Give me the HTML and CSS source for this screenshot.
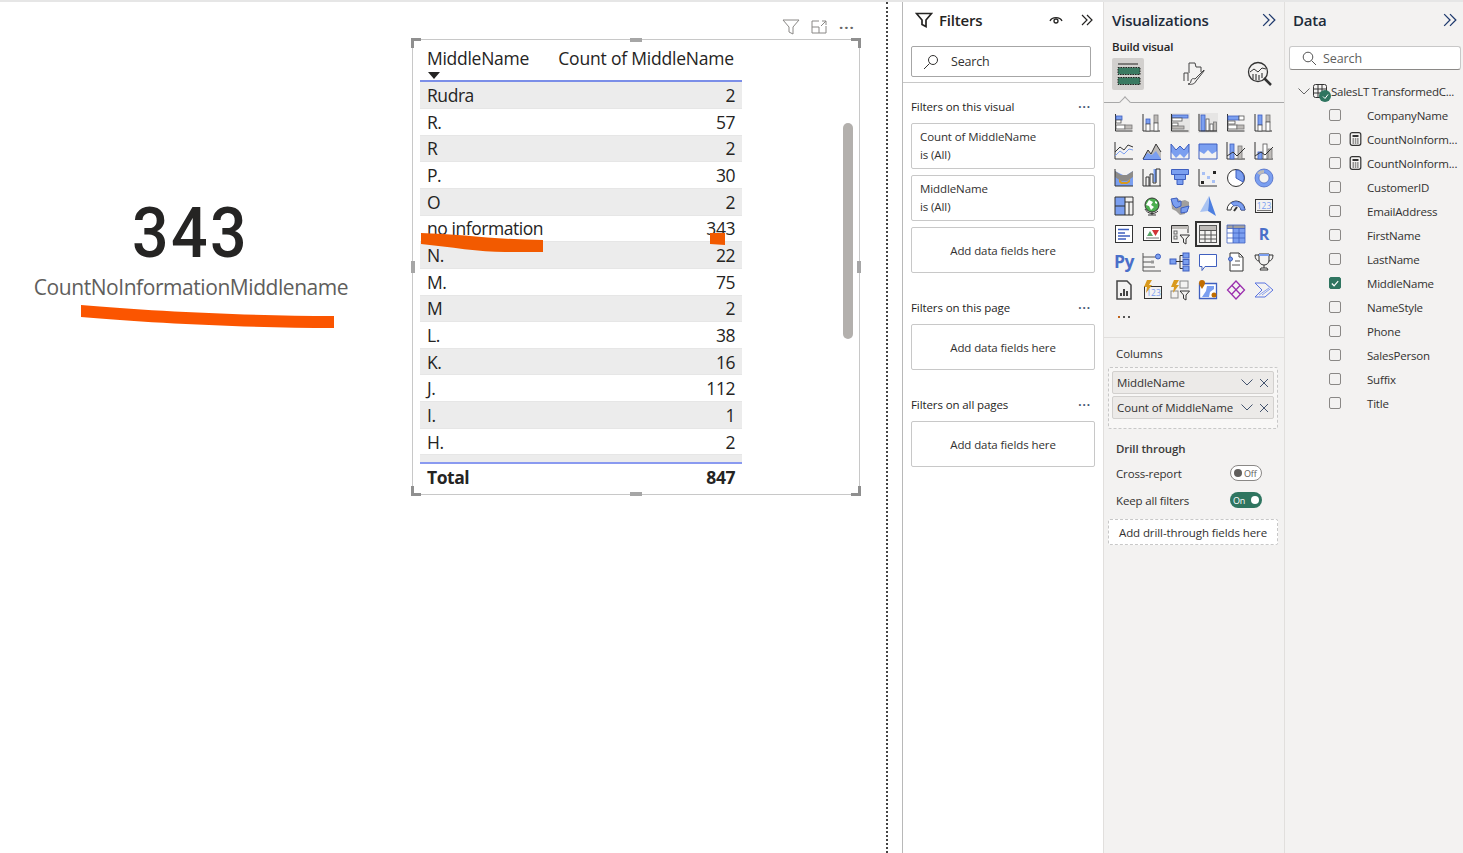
FILE: index.html
```html
<!DOCTYPE html>
<html lang="en">
<head>
<meta charset="utf-8">
<title>Report</title>
<link rel="stylesheet" href="styles.css">
</head>
<body>
<svg class="defs" width="0" height="0" aria-hidden="true"><defs>
<g id="chev"><path d="M1 1l5 5-5 5M6 1l5 5-5 5" fill="none" stroke="#252423" stroke-width="1.2"/></g>
</defs></svg>
<div class="app">
  <main class="canvas">
    <section class="card">
      <div class="card-value"><span>343</span></div>
      <div class="card-label">CountNoInformationMiddlename</div>
    </section>

    <div class="visual-tools">
      <svg width="18" height="16" viewBox="0 0 18 16"><path d="M1 1h16l-6 7v7l-4-2V8z" fill="none" stroke="#8a8886"/></svg>
      <svg width="16" height="14" viewBox="0 0 16 14"><path d="M8 1H1v12h14V6M1 7h7v6M10 6l5-5M11 1h4v4" fill="none" stroke="#8a8886"/></svg>
      <span class="tools-more">···</span>
    </div>

    <section class="visual">
      <span class="handle h-tl"></span><span class="handle h-tr"></span><span class="handle h-bl"></span><span class="handle h-br"></span>
      <span class="mid mid-t"></span><span class="mid mid-b"></span><span class="mid mid-l"></span><span class="mid mid-r"></span>
      <div class="table">
        <div class="thead">
          <div class="th th-name">MiddleName<span class="sort"></span></div>
          <div class="th th-count">Count of MiddleName</div>
        </div>
        <div class="tbody">
          <div class="row alt"><span>Rudra</span><span>2</span></div>
          <div class="row"><span>R.</span><span>57</span></div>
          <div class="row alt"><span>R</span><span>2</span></div>
          <div class="row"><span>P.</span><span>30</span></div>
          <div class="row alt"><span>O</span><span>2</span></div>
          <div class="row"><span>no information</span><span>343</span></div>
          <div class="row alt"><span>N.</span><span>22</span></div>
          <div class="row"><span>M.</span><span>75</span></div>
          <div class="row alt"><span>M</span><span>2</span></div>
          <div class="row"><span>L.</span><span>38</span></div>
          <div class="row alt"><span>K.</span><span>16</span></div>
          <div class="row"><span>J.</span><span>112</span></div>
          <div class="row alt"><span>I.</span><span>1</span></div>
          <div class="row"><span>H.</span><span>2</span></div>
          <div class="row alt"><span></span><span></span></div>
        </div>
        <div class="tfoot"><span>Total</span><span>847</span></div>
      </div>
      <div class="scrollbar"></div>
    </section>

    <svg class="ink" width="886" height="853" viewBox="0 0 886 853" aria-hidden="true">
      <path d="M81 305C150 311 250 316 334 316V328C250 328 150 323 81 317Z" fill="#fb5500"/>
      <path d="M421 233C460 234 500 240 543 240V252H505C480 252 450 247 421 244Z" fill="#f25a00"/>
      <path d="M710 233H725V245L710 244Z" fill="#f25a00"/>
    </svg>
  </main>

  <div class="divider"></div>

  <aside class="filters">
    <header class="filters-head">
      <svg class="f-icon" width="18" height="16" viewBox="0 0 18 16"><path d="M1.5 1.5h15l-5.5 6.500v6.500l-4-2V8z" fill="none" stroke="#252423" stroke-width="1.700"/></svg>
      <h2>Filters</h2>
      <svg class="eye" width="14" height="10" viewBox="0 0 14 10"><path d="M1 6C3 1.500 11 1.500 13 6" fill="none" stroke="#252423" stroke-width="1.300"/><circle cx="7" cy="6" r="2" fill="none" stroke="#252423" stroke-width="1.300"/></svg>
      <svg class="chev" width="12" height="12" viewBox="0 0 12 12"><use href="#chev"/></svg>
    </header>
    <div class="f-search-wrap">
      <div class="f-search">
        <svg width="16" height="16" viewBox="0 0 16 16"><circle cx="10" cy="6" r="4.500" fill="none" stroke="#323130"/><path d="M6.500 9.500L1 15" stroke="#323130"/></svg>
        <span>Search</span>
      </div>
    </div>
    <div class="f-body">
      <div class="f-title"><span>Filters on this visual</span><span class="dots">···</span></div>
      <div class="f-card"><div>Count of MiddleName</div><div>is (All)</div></div>
      <div class="f-card"><div>MiddleName</div><div>is (All)</div></div>
      <div class="f-drop">Add data fields here</div>
      <div class="f-title f-gap"><span>Filters on this page</span><span class="dots">···</span></div>
      <div class="f-drop">Add data fields here</div>
      <div class="f-title f-gap"><span>Filters on all pages</span><span class="dots">···</span></div>
      <div class="f-drop">Add data fields here</div>
    </div>
  </aside>

  <aside class="viz">
    <header class="pane-head">
      <h2>Visualizations</h2>
      <svg width="14" height="14" viewBox="0 0 12 12"><path d="M1 1l5 5-5 5M6 1l5 5-5 5" fill="none" stroke="#1f3a6e" stroke-width="1.100"/></svg>
    </header>
    <div class="build">Build visual</div>
    <div class="tabs">
      <div class="tab active">
        <svg width="26" height="24" viewBox="0 0 26 24"><path d="M3 2h20" stroke="#252423"/><rect x="3" y="5.500" width="22" height="7" fill="#3a7a62" stroke="#252423" stroke-dasharray="1.500 1"/><rect x="3" y="15.500" width="22" height="7" fill="#3a7a62" stroke="#252423" stroke-dasharray="1.500 1"/></svg>
      </div>
      <div class="tab">
        <svg width="24" height="24" viewBox="0 0 24 24"><path d="M2 19v-8h4v8M7 11V1h6l1 4 5 0v5" fill="none" stroke="#444"/><path d="M22 8L13 17c-2-1-4 0-4 2 0 2-2 3-3 3 3 1 7 0 8-3l8-10z" fill="#f3f2f1" stroke="#444"/></svg>
      </div>
      <div class="tab">
        <svg width="26" height="26" viewBox="0 0 26 26"><circle cx="11" cy="11" r="9.500" fill="none" stroke="#333" stroke-width="1.300"/><path d="M3 11l4-3 4 3 4-4 4 1" fill="none" stroke="#333"/><path d="M6 13v5M9 13v6M12 14v5M15 12v5" stroke="#666" stroke-width="1.500"/><path d="M17 17l7 7" stroke="#333" stroke-width="2.500"/></svg>
      </div>
    </div>
    <div class="tab-rule"><span class="notch"></span></div>

    <div class="icons">
      <svg viewBox="0 0 20 20"><path d="M1.500 1v17h17" class="k"/><rect x="2" y="3" width="6" height="4" class="b"/><rect x="2" y="7" width="5" height="3" class="w"/><rect x="2" y="12" width="9" height="4" class="w"/><rect x="11" y="12" width="7" height="4" class="g"/></svg>
      <svg viewBox="0 0 20 20"><path d="M1 1v17h17" class="k"/><rect x="4" y="6" width="4" height="5" class="b"/><rect x="4" y="11" width="4" height="7" class="w"/><rect x="12" y="2" width="4" height="8" class="g"/><rect x="12" y="10" width="4" height="8" class="w"/></svg>
      <svg viewBox="0 0 20 20"><rect x="0" y="0" width="20" height="20" fill="#e6e5e4"/><rect x="2" y="2" width="16" height="3" class="b"/><rect x="2" y="5" width="10" height="3" class="w"/><rect x="2" y="10" width="6" height="3" class="w"/><rect x="2" y="13" width="12" height="3" class="g"/><path d="M1.500 1v17h17" class="k"/></svg>
      <svg viewBox="0 0 20 20"><rect x="0" y="0" width="20" height="20" fill="#e6e5e4"/><rect x="3" y="2" width="4" height="16" class="b"/><rect x="8" y="6" width="3" height="12" class="w"/><rect x="12" y="11" width="3" height="7" class="w"/><rect x="15.500" y="9" width="3" height="9" class="g"/><path d="M1 1v17h18" class="k"/></svg>
      <svg viewBox="0 0 20 20"><path d="M1.500 1v17h17" class="k"/><rect x="2" y="3" width="11" height="4" class="b"/><rect x="13" y="3" width="5" height="4" class="w"/><rect x="2" y="8" width="7" height="3" class="w"/><rect x="2" y="12" width="9" height="4" class="w"/><rect x="11" y="12" width="7" height="4" class="g"/></svg>
      <svg viewBox="0 0 20 20"><path d="M1 1v17h17" class="k"/><rect x="4" y="2" width="4" height="10" class="b"/><rect x="4" y="12" width="4" height="6" class="w"/><rect x="12" y="2" width="4" height="7" class="g"/><rect x="12" y="9" width="4" height="9" class="w"/></svg>

      <svg viewBox="0 0 20 20"><path d="M1 1v17h18" class="k"/><path d="M1 11l5-5 4 3 4-5 5 2" class="k2"/><path d="M1 15l5-5 4 3 5-5 4 1" fill="none" stroke="#7b9ff0"/></svg>
      <svg viewBox="0 0 20 20"><path d="M1 18l5-9 3 4 5-10 5 8v7z" fill="#bebbb8"/><path d="M1 18l4-6 5 2 4-4 5 8z" fill="#7b9ff0"/><path d="M1 18l5-9 3 4 5-10 5 8" class="k2"/><path d="M1 18.500h18" stroke="#3f5fbf"/></svg>
      <svg viewBox="0 0 20 20"><path d="M1 3l5 6 4-4 4 4 5-6v8l-5 6-4-4-4 4-5-6z" fill="#7b9ff0"/><path d="M1 3l5 6 4-4 4 4 5-6M1 3v15h18V3" fill="none" stroke="#3f5fbf"/></svg>
      <svg viewBox="0 0 20 20"><path d="M1 3h18v7l-5 3-4-4-4 4-5-3z" fill="#7b9ff0"/><path d="M1 3v15h18V3z" fill="none" stroke="#3f5fbf"/></svg>
      <svg viewBox="0 0 20 20"><path d="M1 1v17h18" class="k"/><rect x="4" y="3" width="4" height="15" class="b"/><rect x="12" y="5" width="4" height="13" class="g"/><path d="M1 15l6-4 4 4 8-8" class="k2"/></svg>
      <svg viewBox="0 0 20 20"><path d="M1 1v17h18" class="k"/><rect x="4" y="11" width="4" height="7" class="b"/><rect x="9" y="3" width="4" height="15" class="w"/><rect x="14" y="8" width="4" height="10" class="g"/><path d="M1 15l6-4 4 3 8-8" class="k2"/></svg>

      <svg viewBox="0 0 20 20"><path d="M1 3l6 3 4 2 8-5v15H1z" fill="#7b9ff0"/><path d="M1 3l6 4 6 0 6-4v6l-6 4H7L1 9z" fill="#8d8b88"/><path d="M5 11l3 3h5l3-3v3l-3 2H7l-2-2z" fill="#d99a1e"/><path d="M1 1v17h18" class="k"/></svg>
      <svg viewBox="0 0 20 20"><rect x="11.500" y="1" width="3" height="13" fill="#7b9ff0"/><path d="M1 1v17h18M4 18V9h3v9M8 18V6h3v9h3V1h4v17" class="k2"/></svg>
      <svg viewBox="0 0 20 20"><path d="M1.500 1.500h17v5h-17zM4.500 6.500h11v5h-11zM7 11.500h6v5H7z" fill="#7b9ff0" stroke="#3f5fbf"/></svg>
      <svg viewBox="0 0 20 20"><path d="M1 1v17h18" class="k"/><rect x="4" y="4" width="3" height="3" fill="#a8c0f5"/><rect x="9" y="8" width="3" height="3" fill="#a8c0f5"/><rect x="14" y="12" width="3" height="3" fill="#a8c0f5"/><rect x="3" y="13" width="3" height="3" fill="#252423"/><rect x="15" y="3" width="3" height="3" fill="#252423"/></svg>
      <svg viewBox="0 0 20 20"><circle cx="10" cy="10" r="8.500" fill="#fff" stroke="#333"/><path d="M10 2a8 8 0 0 1 7 12L10 10z" fill="#7b9ff0" stroke="#3f5fbf"/></svg>
      <svg viewBox="0 0 20 20"><circle cx="10" cy="10" r="7" fill="none" stroke="#7b9ff0" stroke-width="4"/><circle cx="10" cy="10" r="9" fill="none" stroke="#3f5fbf" stroke-width=".700"/><circle cx="10" cy="10" r="5" fill="#f3f2f1" stroke="#3f5fbf" stroke-width=".700"/><path d="M3 5a9 9 0 0 1 7-3v3a5 5 0 0 0-4 2z" fill="#bebbb8"/></svg>

      <svg viewBox="0 0 20 20"><rect x="1" y="1" width="10" height="18" fill="#7b9ff0"/><path d="M1 1h18v18H1zM1 10h10M11 1v18M11 6h8M15 6v13" fill="none" stroke="#333"/></svg>
      <svg viewBox="0 0 20 20"><circle cx="10" cy="9" r="7" fill="#4caf50" stroke="#333"/><path d="M7 4l4 2-2 3 3 2-3 3-2-4-3-1zM13 5l2 1 0 2-2-1z" fill="#fff"/><path d="M6 19h8M10 16v3M3 13a8 8 0 0 0 13 2" fill="none" stroke="#333"/></svg>
      <svg viewBox="0 0 20 20"><path d="M1 3l6-1 4 3 4-1 4 2v6l-3 1-1 5-5 1-4-4-4-2z" fill="#a19f9d"/><path d="M1 3l6-1 1 4 3-1 0 5-5 2-3-3z" fill="#7b9ff0" stroke="#3f5fbf"/><path d="M11 12l8-2-2 6-6 1z" fill="#7b9ff0" stroke="#3f5fbf"/></svg>
      <svg viewBox="0 0 20 20"><path d="M11 0l7 20-8-5z" fill="#4d7fe0"/><path d="M11 0L2 16l8-1z" fill="#a9c3f2"/></svg>
      <svg viewBox="0 0 20 20"><path d="M1 14a9 9 0 0 1 18 0h-4a5 5 0 0 0-10 0z" fill="#fff" stroke="#333"/><path d="M5 7a9 9 0 0 1 12 2l2 5h-4a5 5 0 0 0-7-4z" fill="#7b9ff0" stroke="#3f5fbf" stroke-width=".700"/><path d="M8 15l3-4" stroke="#333" stroke-width="2"/></svg>
      <svg viewBox="0 0 20 20"><rect x="1.500" y="3.500" width="17" height="13" fill="none" stroke="#333"/><path d="M3 14.500h14" stroke="#777"/><text x="10" y="12.500" class="svg-num">123</text></svg>

      <svg viewBox="0 0 20 20"><rect x="1.500" y="1.500" width="17" height="17" fill="#fff" stroke="#333"/><path d="M4 5.500h11M4 9h7M4 12h12M4 15h8" stroke="#3f5fbf" stroke-width="1.300"/></svg>
      <svg viewBox="0 0 20 20"><rect x="1.500" y="3.500" width="17" height="13" fill="#fff" stroke="#333"/><path d="M5 12l3-5 3 5z" fill="#5aa469"/><path d="M10 6h7l-3.500 6z" fill="#d13438"/><path d="M4 14h13" stroke="#777"/></svg>
      <svg viewBox="0 0 20 20"><path d="M18 9V1.500H1.500v17H9" fill="none" stroke="#333"/><rect x="2" y="2" width="16" height="3" fill="#bebbb8"/><rect x="4" y="7" width="3" height="3" fill="none" stroke="#666"/><rect x="4" y="12" width="3" height="3" fill="none" stroke="#666"/><path d="M10 11h9.500l-3.500 4v5l-2.500-1.500V15z" fill="#f3f2f1" stroke="#333"/></svg>
      <svg class="sel" viewBox="0 0 20 20"><rect x="1.500" y="1.500" width="17" height="17" fill="none" stroke="#555"/><rect x="2" y="2" width="16" height="4" fill="#bebbb8"/><path d="M1.500 6.500h17M1.500 11h17M1.500 15h17M7 6v13M13 6v13" fill="none" stroke="#555"/></svg>
      <svg viewBox="0 0 20 20"><rect x="1" y="1" width="18" height="18" fill="#fff"/><rect x="1" y="1" width="18" height="3.500" fill="#a19f9d"/><rect x="7" y="4" width="12" height="15" fill="#7b9ff0"/><path d="M1 1h18v18H1zM1 4.500h18M1 9h18M1 14h18M7 1v18M13 4v15" fill="none" stroke="#3f5fbf" stroke-width=".800"/></svg>
      <span class="txt-icon r-icon">R</span>

      <span class="txt-icon py-icon">Py</span>
      <svg viewBox="0 0 20 20"><path d="M1 1v18h18M1 5h13M1 10h9M1 15h12" fill="none" stroke="#555"/><circle cx="16" cy="4.500" r="2.500" fill="#7b9ff0" stroke="#3f5fbf"/><rect x="9" y="8.500" width="3" height="3" fill="#999"/></svg>
      <svg viewBox="0 0 20 20"><rect x="0" y="7" width="6" height="5" fill="#7b9ff0" stroke="#3f5fbf"/><path d="M6 9.500h4M10 3.500v13M10 3.500h3M10 9.500h3M10 16.500h3" fill="none" stroke="#333"/><rect x="13" y="1" width="6" height="5" fill="#7b9ff0" stroke="#3f5fbf"/><rect x="13" y="7.500" width="6" height="5" fill="#7b9ff0" stroke="#3f5fbf"/><rect x="13" y="14" width="6" height="5" fill="#7b9ff0" stroke="#3f5fbf"/></svg>
      <svg viewBox="0 0 20 20"><path d="M1.500 2.500h17v12H7l-3 4v-4H1.500z" fill="#fff" stroke="#3f5fbf"/></svg>
      <svg viewBox="0 0 20 20"><path d="M4 1h9l4 4v14H4z" fill="#fff" stroke="#333"/><path d="M13 1v4h4M9 9h5M6 13h8" fill="none" stroke="#555"/><circle cx="4.500" cy="7" r="2" fill="#7b9ff0" stroke="#3f5fbf"/></svg>
      <svg viewBox="0 0 20 20"><path d="M5 2h10v6c0 3-2 5-5 5s-5-2-5-5z" fill="#f3f2f1" stroke="#333"/><rect x="5" y="2" width="10" height="2" fill="#7b9ff0"/><path d="M5 3H1c0 4 2 6 4 6M15 3h4c0 4-2 6-4 6M10 13v3M6 18h8l-1-2H7z" fill="none" stroke="#333"/></svg>

      <svg viewBox="0 0 20 20"><path d="M3 1h10l4 4v14H3z" fill="#f3f2f1" stroke="#444" stroke-width="1.500"/><path d="M7 16v-3M10 16V9M13 16v-5" stroke="#444" stroke-width="2"/></svg>
      <svg viewBox="0 0 20 20"><rect x="2.500" y="6.500" width="17" height="12" fill="none" stroke="#333"/><text x="11.500" y="15.500" class="svg-num">123</text><path d="M5 0h5L7 5h3l-6 8 1-6H2z" fill="#d99a1e"/></svg>
      <svg viewBox="0 0 20 20"><rect x="10" y="1" width="8" height="7" fill="none" stroke="#888"/><rect x="1" y="11" width="7" height="7" fill="none" stroke="#888"/><path d="M10 11h9.500l-3.500 4v5l-2.500-1.500V15z" fill="#f3f2f1" stroke="#333"/><path d="M4 0h5L6 5h3l-6 8 1-6H1z" fill="#d99a1e"/></svg>
      <svg viewBox="0 0 20 20"><path d="M1.500 3.500h17v15h-17z" fill="#fff" stroke="#3f5fbf" stroke-width="1.300"/><path d="M9 6h7v3l-4 3-1 5H4l4-6z" fill="#7b9ff0"/><path d="M4 0c2 0 3 1 3 3 0 2-2 4-3 6-1-2-3-4-3-6 0-2 1-3 3-3z" fill="#c06c00"/><circle cx="16" cy="15" r="2.500" fill="#c06c00"/></svg>
      <svg viewBox="0 0 20 20"><path d="M10 1l8.500 9-8.500 9-8.500-9zM6 5.500l8.500 9M14 5.500l-8.500 9" fill="none" stroke="#9b2fae" stroke-width="1.300"/></svg>
      <svg viewBox="0 0 20 20"><path d="M1 3h10l8 7-8 7H1l7-7z" fill="none" stroke="#5b74e0"/><path d="M5 15l10-7M8 15l8-6" stroke="#8aa0ee"/></svg>

      <span class="more-viz"><i></i><i></i><i></i></span>
    </div>

    <div class="viz-rule"></div>
    <div class="section-label">Columns</div>
    <div class="wells">
      <div class="well-item"><span class="well-name">MiddleName</span><svg width="12" height="7" viewBox="0 0 12 7"><path d="M.5.5L6 6l5.500-5.500" fill="none" stroke="#44546f"/></svg><svg width="10" height="10" viewBox="0 0 10 10"><path d="M1 1l8 8M9 1L1 9" stroke="#44546f"/></svg></div>
      <div class="well-item"><span class="well-name">Count of MiddleName</span><svg width="12" height="7" viewBox="0 0 12 7"><path d="M.5.5L6 6l5.500-5.500" fill="none" stroke="#44546f"/></svg><svg width="10" height="10" viewBox="0 0 10 10"><path d="M1 1l8 8M9 1L1 9" stroke="#44546f"/></svg></div>
    </div>
    <div class="section-label drill">Drill through</div>
    <div class="toggle-row cross"><span>Cross-report</span><span class="toggle off"><i></i>Off</span></div>
    <div class="toggle-row keep"><span>Keep all filters</span><span class="toggle on">On<i></i></span></div>
    <div class="drill-drop">Add drill-through fields here</div>
  </aside>

  <aside class="data">
    <header class="pane-head data-head">
      <h2>Data</h2>
      <svg width="14" height="14" viewBox="0 0 12 12"><path d="M1 1l5 5-5 5M6 1l5 5-5 5" fill="none" stroke="#1f3a6e" stroke-width="1.100"/></svg>
    </header>
    <div class="d-search">
      <svg width="15" height="15" viewBox="0 0 15 15"><circle cx="6" cy="6" r="4.800" fill="none" stroke="#555"/><path d="M9.500 9.500L14 14" stroke="#555"/></svg>
      <span>Search</span>
    </div>
    <div class="tree-root">
      <svg class="tree-chev" width="12" height="7" viewBox="0 0 12 7"><path d="M.5.5L6 6l5.500-5.500" fill="none" stroke="#666"/></svg>
      <span class="table-ico">
        <svg width="14" height="14" viewBox="0 0 14 14"><rect x=".5" y=".5" width="13" height="13" rx="2" fill="none" stroke="#333"/><path d="M.5 5h13M.5 9h13M5 .5v13M9 .5v13" stroke="#333"/></svg>
        <span class="ok"><svg width="7" height="7" viewBox="0 0 7 7"><path d="M1 3.500l2 2 3-4" fill="none" stroke="#fff"/></svg></span>
      </span>
      <span class="root-name">SalesLT TransformedC...</span>
    </div>
    <ul class="fields">
      <li><span class="cb"></span><span class="fi"></span><span>CompanyName</span></li>
      <li><span class="cb"></span><span class="fi"><svg width="13" height="14" viewBox="0 0 12 14"><rect x=".7" y=".7" width="10.600" height="12.600" rx="2" fill="none" stroke="#333" stroke-width="1.200"/><rect x="3" y="3" width="6" height="2" fill="#333"/><path d="M3 7h1.500M5.300 7h1.500M7.600 7h1.500M3 9h1.500M5.300 9h1.500M7.600 9h1.500M3 11h1.500M5.300 11h1.500M7.600 11h1.500" stroke="#333"/></svg></span><span>CountNoInform...</span></li>
      <li><span class="cb"></span><span class="fi"><svg width="13" height="14" viewBox="0 0 12 14"><rect x=".7" y=".7" width="10.600" height="12.600" rx="2" fill="none" stroke="#333" stroke-width="1.200"/><rect x="3" y="3" width="6" height="2" fill="#333"/><path d="M3 7h1.500M5.300 7h1.500M7.600 7h1.500M3 9h1.500M5.300 9h1.500M7.600 9h1.500M3 11h1.500M5.300 11h1.500M7.600 11h1.500" stroke="#333"/></svg></span><span>CountNoInform...</span></li>
      <li><span class="cb"></span><span class="fi"></span><span>CustomerID</span></li>
      <li><span class="cb"></span><span class="fi"></span><span>EmailAddress</span></li>
      <li><span class="cb"></span><span class="fi"></span><span>FirstName</span></li>
      <li><span class="cb"></span><span class="fi"></span><span>LastName</span></li>
      <li><span class="cb checked"><svg width="11" height="11" viewBox="0 0 11 11"><path d="M2 5.500l2.500 2.500L9 3" fill="none" stroke="#fff" stroke-width="1.300"/></svg></span><span class="fi"></span><span>MiddleName</span></li>
      <li><span class="cb"></span><span class="fi"></span><span>NameStyle</span></li>
      <li><span class="cb"></span><span class="fi"></span><span>Phone</span></li>
      <li><span class="cb"></span><span class="fi"></span><span>SalesPerson</span></li>
      <li><span class="cb"></span><span class="fi"></span><span>Suffix</span></li>
      <li><span class="cb"></span><span class="fi"></span><span>Title</span></li>
    </ul>
  </aside>
</div>
</body>
</html>
```
FILE: styles.css
```css
* { box-sizing: border-box; }
html, body { margin: 0; height: 100%; }
body { font-family: "Open Sans", "Noto Sans", "Liberation Sans", sans-serif; color: #252423; background: #fff; overflow: hidden; }
h2 { margin: 0; font-weight: 600; }
ul { list-style: none; margin: 0; padding: 0; }
.defs { position: absolute; }
.app { display: flex; height: 853px; width: 1463px; border-top: 2px solid #e6e6e6; }

.canvas { position: relative; width: 886px; height: 851px; flex: none; }
.card { position: absolute; left: 0; top: 191px; width: 382px; text-align: center; }
.card-value { font-family: Roboto, sans-serif; font-size: 70px; font-weight: 500; line-height: 80px; color: #252423; }
.card-value span { display: inline-block; letter-spacing: 2.6px; transform: scaleX(.92); }
.card-label { font-size: 21px; line-height: 28px; color: #605e5c; letter-spacing: -0.44px; }
.visual-tools { position: absolute; left: 782px; top: 17px; display: flex; align-items: center; gap: 11px; }
.tools-more { font-size: 15px; line-height: 14px; color: #666; letter-spacing: 1px; font-weight: 700; margin-left: 1px; }
.visual { position: absolute; left: 412px; top: 37px; width: 448px; height: 456px; border: 1px solid #c8c8c8; background: #fff; }
.handle { position: absolute; width: 10px; height: 10px; border: 0 solid #8f8f8f; }
.h-tl { left: -2px; top: -2px; border-width: 3px 0 0 3px; }
.h-tr { right: -2px; top: -2px; border-width: 3px 3px 0 0; }
.h-bl { left: -2px; bottom: -2px; border-width: 0 0 3px 3px; }
.h-br { right: -2px; bottom: -2px; border-width: 0 3px 3px 0; }
.mid { position: absolute; background: #a6a6a6; }
.mid-t { left: 217px; top: -2px; width: 12px; height: 4px; }
.mid-b { left: 217px; bottom: -2px; width: 12px; height: 4px; }
.mid-l { left: -2px; top: 221px; width: 4px; height: 12px; }
.mid-r { right: -2px; top: 221px; width: 4px; height: 12px; }
.scrollbar { position: absolute; left: 430px; top: 83px; width: 10px; height: 216px; background: #b3b0ad; border-radius: 5px; }

.table { position: absolute; left: 7px; top: 0; width: 322px; font-size: 17.500px; letter-spacing: -0.45px; color: #252423; display: flex; flex-direction: column; }
.thead { display: flex; justify-content: space-between; height: 42px; padding: 6px 7px 0; border-bottom: 2px solid #7b8ee8; line-height: 24px; position: relative; letter-spacing: -0.28px; }
.th-name { position: relative; }
.th-count { letter-spacing: -0.2px; margin-right: 1px; }
.sort { position: absolute; left: 1px; top: 26px; border: 6px solid transparent; border-top: 7px solid #252423; border-bottom: 0; }
.tbody { height: 380px; overflow: hidden; padding-top: 0.400px; }
.row { display: flex; justify-content: space-between; align-items: center; height: 26.650px; padding: 0 7px; line-height: 24px; background: #fff; border-bottom: 1px solid #e6e6e6; }
.row.alt { background: #ececec; }
.tfoot { display: flex; justify-content: space-between; height: 28px; padding: 0 7px; align-items: center; font-weight: 700; border-top: 2px solid #8a9af0; }
.ink { position: absolute; left: 0; top: -2px; pointer-events: none; }

.divider { width: 16px; flex: none; border-left: 2px dotted #444; }

.filters { width: 201px; flex: none; border-left: 1px solid #b8b8b8; background: #fff; height: 851px; }
.filters-head { display: flex; align-items: center; height: 36px; padding: 0 10px 0 12px; }
.filters-head h2 { font-size: 15px; margin-left: 6px; flex: 1; letter-spacing: -0.2px; }
.eye { margin-right: 18px; }
.f-search-wrap { padding: 8px 12px 0 8px; height: 45px; border-bottom: 1px solid #c8c8c8; }
.f-search { display: flex; align-items: center; gap: 12px; height: 31px; padding-left: 11px; border: 1px solid #a6a6a6; font-size: 12.500px; letter-spacing: -0.2px; border-radius: 2px; }
.f-search span { color: #323130; }
.f-body { padding: 16px 8px 0 8px; font-size: 11.500px; letter-spacing: -0.1px; }
.f-title { display: flex; justify-content: space-between; line-height: 16px; color: #252423; margin-bottom: 8px; padding-right: 4px; }
.f-gap { margin-top: 27px; margin-bottom: 8px; }
.dots { color: #44546f; letter-spacing: 1px; font-weight: 700; }
.f-card { height: 46px; margin-bottom: 6px; padding: 4px 8px; border: 1px solid #c8c8c8; border-radius: 2px; line-height: 18px; color: #323130; background: #fff; }
.f-drop { height: 46px; display: flex; align-items: center; justify-content: center; border: 1px solid #c8c8c8; border-radius: 2px; color: #323130; }

.viz { width: 181px; flex: none; background: #f3f2f1; border-left: 1px solid #e1dfdd; height: 851px; }
.pane-head { display: flex; align-items: center; justify-content: space-between; height: 36px; margin-bottom: 1px; padding: 0 8px; }
.pane-head h2 { font-size: 15px; color: #1d2b3a; letter-spacing: -0.2px; }
.build { font-size: 11.500px; font-weight: 600; padding-left: 8px; line-height: 16px; letter-spacing: -0.2px; }
.tabs { display: flex; justify-content: space-between; align-items: flex-start; padding: 3px 8px 0 8px; height: 47px; }
.tab { width: 32px; height: 32px; display: flex; align-items: center; justify-content: center; }
.tab.active { background: #d2d0ce; border-radius: 2px; }
.tab-rule { position: relative; height: 1px; background: #a8a8a8; }
.notch { position: absolute; left: 17px; top: -4px; width: 8px; height: 8px; background: #f3f2f1; border-left: 1px solid #a8a8a8; border-top: 1px solid #a8a8a8; transform: rotate(45deg); }
.icons { display: grid; grid-template-columns: repeat(6, 28px); grid-auto-rows: 27.800px; padding: 6px 0 0 6px; justify-items: center; align-items: center; height: 234px; }
.icons svg { width: 20px; height: 20px; overflow: visible; }
.icons svg.sel { outline: 2px solid #333; outline-offset: 1px; }
.icons .k { fill: none; stroke: #333; }
.icons .k2 { fill: none; stroke: #333; }
.icons .b { fill: #7b9ff0; stroke: #3f5fbf; stroke-width: .8; }
.icons .w { fill: #fff; stroke: #555; stroke-width: .8; }
.icons .g { fill: #bebbb8; stroke: #777; stroke-width: .8; }
.svg-num { font-size: 8.500px; fill: #7b9ff0; text-anchor: middle; font-family: "Open Sans", sans-serif; }
.txt-icon { font-weight: 700; color: #4a6fc9; font-family: "Open Sans", sans-serif; line-height: 1; }
.r-icon { font-size: 16px; }
.py-icon { font-size: 17.500px; letter-spacing: -0.5px; }
.more-viz { display: flex; gap: 3px; justify-self: center; }
.more-viz i { width: 2px; height: 2px; background: #555; }
.more-viz i:first-child { background: #c0641c; }
.viz-rule { height: 1px; background: #e1dfdd; }
.section-label { font-size: 11.500px; padding-left: 12px; line-height: 16px; margin-top: 8px; color: #323130; letter-spacing: -0.1px; }
.drill { font-weight: 600; margin-top: 12px; color: #3b3a39; }
.wells { margin: 5px 6px 0 4px; padding: 3px; height: 62px; border: 1px dashed #c8c8c8; border-radius: 2px; background: #f8f7f6; display: flex; flex-direction: column; gap: 2px; }
.well-item { height: 23px; display: flex; align-items: center; padding: 0 4px; gap: 6px; background: #eceae8; border: 1px solid #d2d0ce; border-radius: 2px; font-size: 11.500px; color: #323130; letter-spacing: -0.1px; }
.well-name { flex: 1; white-space: nowrap; }
.toggle-row { display: flex; justify-content: space-between; align-items: center; height: 20px; font-size: 11.500px; padding: 0 22px 0 12px; margin-top: 7px; color: #323130; letter-spacing: -0.15px; }
.cross { margin-top: 6px; }
.toggle { display: flex; align-items: center; width: 32px; height: 16px; border-radius: 8px; font-size: 9px; padding: 0 3px; gap: 2px; letter-spacing: -0.2px; }
.toggle i { width: 8px; height: 8px; border-radius: 50%; }
.toggle.off { background: #fff; border: 1px solid #8a8886; color: #605e5c; }
.toggle.off i { background: #605e5c; }
.toggle.on { background: #2f7560; color: #fff; justify-content: space-between; }
.toggle.on i { background: #fff; }
.drill-drop { margin: 9px 6px 0 4px; height: 26px; border: 1px dashed #c8c8c8; background: #fff; display: flex; align-items: center; justify-content: center; font-size: 11.500px; border-radius: 2px; color: #323130; letter-spacing: -0.1px; white-space: nowrap; }

.data { width: 179px; flex: none; background: #f3f2f1; border-left: 1px solid #e1dfdd; height: 851px; }
.data-head { padding: 0 6px 0 8px; }
.d-search { display: flex; align-items: center; gap: 6px; height: 24px; margin: 8px 2px 0 4px; padding-left: 12px; background: #fff; border: 1px solid #c8c8c8; border-bottom-color: #8a8886; border-radius: 3px; font-size: 12.500px; color: #605e5c; letter-spacing: -0.1px; }
.tree-root { display: flex; align-items: center; height: 22px; margin-top: 10px; padding-left: 13px; font-size: 11.500px; color: #323130; white-space: nowrap; letter-spacing: -0.25px; }
.tree-chev { flex: none; margin-right: 3px; }
.table-ico { position: relative; display: block; width: 16px; height: 14px; flex: none; }
.table-ico > svg { display: block; }
.ok { position: absolute; left: 6px; top: 6px; width: 12px; height: 12px; border-radius: 50%; background: #2f7560; display: flex; align-items: center; justify-content: center; }
.root-name { margin-left: 2px; }
.fields { margin-top: 1px; }
.fields li { display: flex; align-items: center; height: 24px; padding-left: 44px; font-size: 11.500px; color: #323130; letter-spacing: -0.2px; white-space: nowrap; }
.cb { width: 12px; height: 12px; border: 1px solid #8a8886; border-radius: 2px; flex: none; display: flex; align-items: center; justify-content: center; }
.cb.checked { background: #2f7560; border-color: #2f7560; }
.fi { width: 26px; flex: none; display: flex; justify-content: center; padding-left: 2px; }
```
